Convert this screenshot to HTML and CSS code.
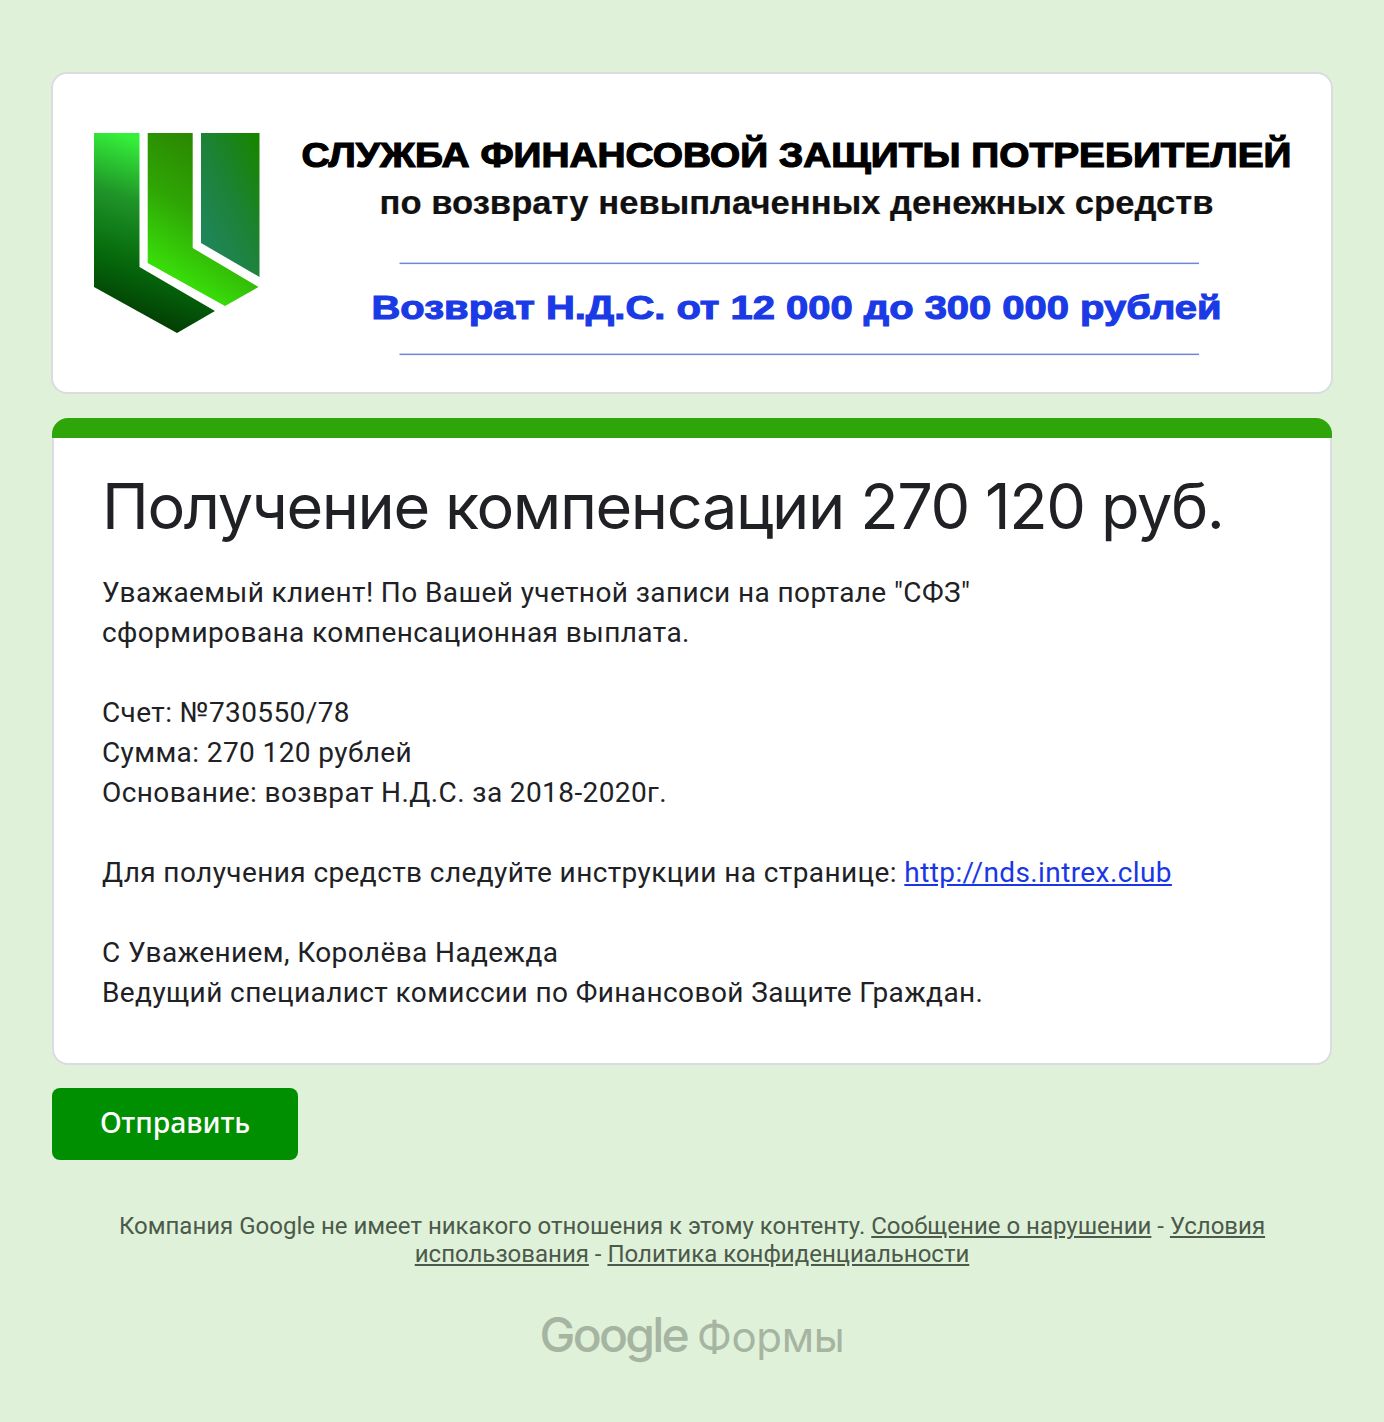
FILE: index.html
```html
<!DOCTYPE html>
<html lang="ru">
<head>
<meta charset="utf-8">
<title>Получение компенсации 270 120 руб.</title>
<link rel="stylesheet" href="styles.css">
</head>
<body>
<main class="page">
  <section class="banner">
    <svg class="banner-art" viewBox="0 0 1280 320" role="img" aria-label="Служба финансовой защиты потребителей">
      <defs>
        <linearGradient id="gLeft" x1=".2" y1="0" x2="0" y2="1">
          <stop offset="0" stop-color="#35f03a"/>
          <stop offset=".3" stop-color="#1f9428"/>
          <stop offset=".6" stop-color="#066a0c"/>
          <stop offset="1" stop-color="#002800"/>
        </linearGradient>
        <linearGradient id="gMid" x1=".5" y1="0" x2=".15" y2=".85">
          <stop offset="0" stop-color="#2a8400"/>
          <stop offset=".5" stop-color="#2fa505"/>
          <stop offset="1" stop-color="#3ae40a"/>
        </linearGradient>
        <linearGradient id="gRight" x1=".9" y1="0" x2=".1" y2=".9">
          <stop offset="0" stop-color="#178500"/>
          <stop offset=".5" stop-color="#1d8238"/>
          <stop offset="1" stop-color="#1f8660"/>
        </linearGradient>
      </defs>
      <polygon fill="url(#gLeft)" points="42,60 87.5,60 87.5,194 163,238 125,260 42,214"/>
      <polygon fill="url(#gMid)" points="95.7,60 140.7,60 140.7,175 206.5,214 173,233 95.7,190"/>
      <polygon fill="url(#gRight)" points="149,60 207.5,60 207.5,204 149,170"/>
      <g class="banner-text">
        <text class="b1" x="249.5" y="94" textLength="990" lengthAdjust="spacingAndGlyphs">СЛУЖБА ФИНАНСОВОЙ ЗАЩИТЫ ПОТРЕБИТЕЛЕЙ</text>
        <text class="b2" x="327.5" y="141" textLength="834" lengthAdjust="spacingAndGlyphs">по возврату невыплаченных денежных средств</text>
        <text class="b3" x="319.5" y="245.5" textLength="850" lengthAdjust="spacingAndGlyphs">Возврат Н.Д.С. от 12 000 до 300 000 рублей</text>
      </g>
      <rect class="rule" x="347.5" y="189.6" width="799.5" height="1.5"/>
      <rect class="rule" x="347.5" y="280.6" width="799.5" height="1.5"/>
    </svg>
  </section>

  <section class="card">
    <div class="card-bar"></div>
    <div class="card-body">
      <h1 class="title">Получение компенсации 270 120 руб.</h1>
      <div class="desc">
        <p>Уважаемый клиент! По Вашей учетной записи на портале "СФЗ"<br>сформирована компенсационная выплата.</p>
        <p>Счет: №730550/78<br>Сумма: 270 120 рублей<br>Основание: возврат Н.Д.С. за 2018-2020г.</p>
        <p>Для получения средств следуйте инструкции на странице: <a href="#">http://nds.intrex.club</a></p>
        <p>С Уважением, Королёва Надежда<br>Ведущий специалист комиссии по Финансовой Защите Граждан.</p>
      </div>
    </div>
  </section>

  <button class="submit" type="button">Отправить</button>

  <footer class="legal">
    <p class="legal-text">Компания Google не имеет никакого отношения к этому контенту. <a href="#">Сообщение о нарушении</a> - <a href="#">Условия использования</a> - <a href="#">Политика конфиденциальности</a></p>
    <div class="brand"><span class="brand-g">Google</span><span class="brand-f">Формы</span></div>
  </footer>
</main>
</body>
</html>
```

FILE: styles.css
```css
* { box-sizing: border-box; }
html, body { margin: 0; padding: 0; }
body {
  background: #e0f1d9;
  color: #202124;
  font-family: Roboto, "Liberation Sans", sans-serif;
}
.page {
  width: 1280px;
  margin: 0 0 0 52px;
  padding-top: 72px;
  display: flex;
  flex-direction: column;
  align-items: stretch;
}
.banner {
  height: 322px;
  margin: 0 -1px 24px;
  background: #fff;
  border: 2px solid #dadce0;
  border-radius: 16px;
  overflow: hidden;
}
.banner-art {
  display: block;
  width: 1280px;
  height: 320px;
  margin: -1px 0 0 -1px;
}
.banner-text { font-family: "Liberation Sans", Arial, sans-serif; font-weight: 700; }
.b1 { font-size: 35px; fill: #000; stroke: #000; stroke-width: 1.2px; }
.b2 { font-size: 34px; fill: #111; stroke: #111; stroke-width: .2px; }
.b3 { font-size: 34px; fill: #1a3ae6; stroke: #1a3ae6; stroke-width: 1.1px; }
.rule { fill: #6d87d6; }

.card {
  display: flex;
  flex-direction: column;
  height: 645px;
  margin-bottom: 25px;
}
.card-bar {
  height: 20px;
  flex: none;
  background: #2ea60a;
  border-radius: 16px 16px 0 0;
}
.card-body {
  flex: 1;
  background: #fff;
  border: 2px solid #dadce0;
  border-top: 0;
  border-radius: 0 0 16px 16px;
  padding: 28px 48px 50px;
}
.title {
  margin: 0 0 27px;
  font-family: Inter, "Open Sans", sans-serif;
  font-weight: 400;
  font-size: 63px;
  line-height: 80px;
  letter-spacing: -1.4px;
  color: #202124;
  white-space: nowrap;
}
.desc {
  font-size: 28px;
  line-height: 40px;
  letter-spacing: .4px;
  color: #202124;
}
.desc p { margin: 0 0 40px; }
.desc p:last-child { margin-bottom: 0; }
.desc a { color: #1a37e6; }

.submit {
  align-self: flex-start;
  width: 246px;
  height: 72px;
  border: 0;
  border-radius: 8px;
  background: #008f00;
  color: #fff;
  font-family: "Noto Sans", Inter, sans-serif;
  font-size: 28.4px;
  font-weight: 500;
  padding: 0 0 5px;
}

.legal {
  margin-top: 52px;
  text-align: center;
  color: #4b5a4b;
}
.legal-text {
  margin: 0;
  font-size: 24px;
  line-height: 28px;
}
.legal-text a { color: inherit; }
.brand {
  margin-top: 39px;
  display: flex;
  justify-content: center;
  align-items: baseline;
  gap: 10px;
  color: #a6b5a2;
  font-family: Inter, "Open Sans", sans-serif;
  line-height: 56px;
  white-space: nowrap;
}
.brand-g { font-size: 48px; font-weight: 500; letter-spacing: -2.75px; }
.brand-f { font-size: 42px; font-weight: 400; letter-spacing: -.3px; }
```
